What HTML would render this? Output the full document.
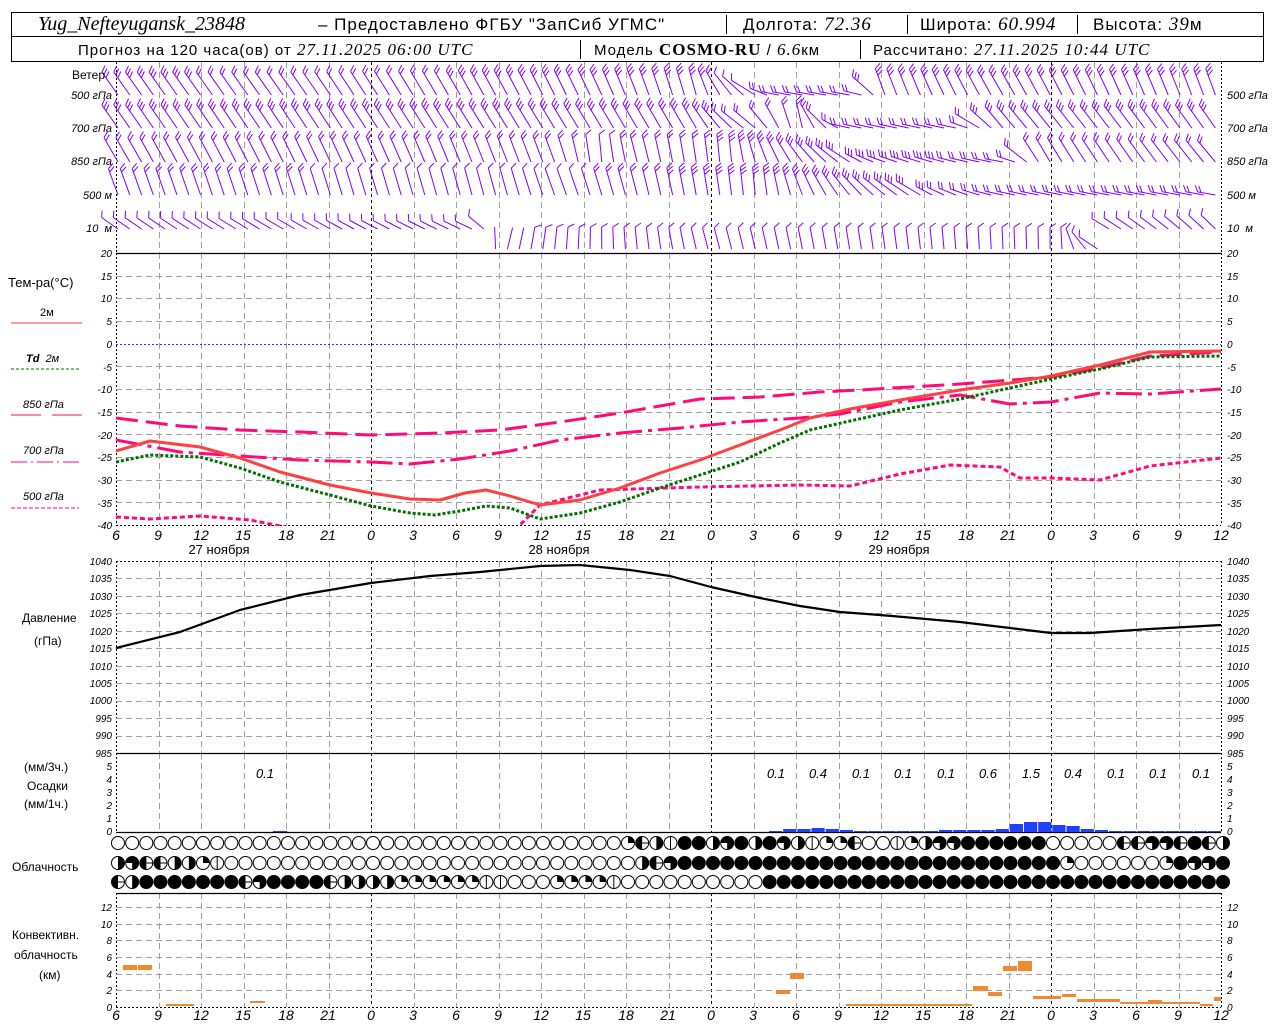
<!DOCTYPE html>
<html><head><meta charset="utf-8">
<style>
html,body{margin:0;padding:0;background:#fff;}
svg{display:block;font-family:"Liberation Sans","DejaVu Sans",sans-serif;}
.ax{font-size:11px;font-style:italic;fill:#000;}
.lb{font-size:12px;fill:#000;}
.hr{font-size:14px;font-style:italic;fill:#000;}
.pv{font-size:13px;font-style:italic;fill:#000;}
</style></head>
<body>
<svg id="s" width="1280" height="1024" viewBox="0 0 1280 1024" xmlns="http://www.w3.org/2000/svg">
<rect x="0" y="0" width="1280" height="1024" fill="#fff"/>
<g id="grid"></g>
<g id="data"></g>
<!-- header -->
<rect x="11.5" y="12.5" width="1252" height="49" fill="none" stroke="#000"/>
<line x1="11" y1="36.5" x2="1264" y2="36.5" stroke="#000"/>
<text x="38" y="30" style="font-family:'Liberation Serif',serif;font-style:italic;font-size:20px">Yug_Nefteyugansk_23848</text>
<text x="318" y="30" style="font-size:17px;letter-spacing:1px">– Предоставлено ФГБУ "ЗапСиб УГМС"</text>
<line x1="726.5" y1="15" x2="726.5" y2="34" stroke="#000"/>
<text x="743" y="30" style="font-size:17px;letter-spacing:1px">Долгота: <tspan style="font-family:'Liberation Serif',serif;font-style:italic;font-size:19px">72.36</tspan></text>
<line x1="907.5" y1="15" x2="907.5" y2="34" stroke="#000"/>
<text x="920" y="30" style="font-size:17px;letter-spacing:1px">Широта: <tspan style="font-family:'Liberation Serif',serif;font-style:italic;font-size:19px">60.994</tspan></text>
<line x1="1077.5" y1="15" x2="1077.5" y2="34" stroke="#000"/>
<text x="1093" y="30" style="font-size:17px;letter-spacing:1px">Высота: <tspan style="font-family:'Liberation Serif',serif;font-style:italic;font-size:19px">39</tspan>м</text>
<text x="78" y="55" style="font-size:15px;letter-spacing:1px">Прогноз на 120 часа(ов) от <tspan style="font-family:'Liberation Serif',serif;font-style:italic;font-size:17px">27.11.2025 06:00 UTC</tspan></text>
<line x1="580.5" y1="40" x2="580.5" y2="59" stroke="#000"/>
<text x="594" y="55" style="font-size:15px;letter-spacing:1px">Модель <tspan style="font-family:'Liberation Serif',serif;font-weight:bold;font-size:17px">COSMO-RU</tspan> / <tspan style="font-family:'Liberation Serif',serif;font-style:italic;font-size:17px">6.6</tspan>км</text>
<line x1="860.5" y1="40" x2="860.5" y2="59" stroke="#000"/>
<text x="873" y="55" style="font-size:15px;letter-spacing:1px">Рассчитано: <tspan style="font-family:'Liberation Serif',serif;font-style:italic;font-size:17px">27.11.2025 10:44 UTC</tspan></text>

<!-- wind labels -->
<text class="lb" x="72" y="79">Ветер</text>
<text class="ax" x="112" y="99" text-anchor="end">500 гПа</text>
<text class="ax" x="112" y="132" text-anchor="end">700 гПа</text>
<text class="ax" x="112" y="165" text-anchor="end">850 гПа</text>
<text class="ax" x="112" y="199" text-anchor="end">500 м</text>
<text class="ax" x="112" y="232" text-anchor="end">10 &#160;м</text>
<text class="ax" x="1227" y="99">500 гПа</text>
<text class="ax" x="1227" y="132">700 гПа</text>
<text class="ax" x="1227" y="165">850 гПа</text>
<text class="ax" x="1227" y="199">500 м</text>
<text class="ax" x="1227" y="232">10 &#160;м</text>

<!-- temp legend -->
<text class="lb" x="8" y="287" style="font-size:13px">Тем-ра(°C)</text>
<text class="ax" x="40" y="316" style="font-style:normal">2м</text>
<line x1="11" y1="323" x2="82" y2="323" stroke="#ff4040"/>
<text class="ax" x="26" y="362"><tspan style="font-weight:bold">Td</tspan> &#160;2м</text>
<line x1="11" y1="369" x2="79" y2="369" stroke="#007000" stroke-dasharray="3,2"/>
<text class="ax" x="23" y="408">850 гПа</text>
<line x1="11" y1="415" x2="41" y2="415" stroke="#ff0a78"/><line x1="52" y1="415" x2="82" y2="415" stroke="#ff0a78"/>
<text class="ax" x="23" y="454">700 гПа</text>
<line x1="11" y1="462" x2="79" y2="462" stroke="#ff0a78" stroke-dasharray="16,4,2,4"/>
<text class="ax" x="23" y="500">500 гПа</text>
<line x1="11" y1="508" x2="79" y2="508" stroke="#ff0a78" stroke-dasharray="4,2"/>

<!-- hour labels -->
<g class="hr" text-anchor="middle">
<text x="116" y="540">6</text><text x="158" y="540">9</text><text x="201" y="540">12</text><text x="243" y="540">15</text><text x="286" y="540">18</text><text x="328" y="540">21</text><text x="371" y="540">0</text><text x="413" y="540">3</text><text x="456" y="540">6</text><text x="498" y="540">9</text><text x="541" y="540">12</text><text x="583" y="540">15</text><text x="626" y="540">18</text><text x="668" y="540">21</text><text x="711" y="540">0</text><text x="753" y="540">3</text><text x="796" y="540">6</text><text x="838" y="540">9</text><text x="881" y="540">12</text><text x="923" y="540">15</text><text x="966" y="540">18</text><text x="1008" y="540">21</text><text x="1051" y="540">0</text><text x="1093" y="540">3</text><text x="1136" y="540">6</text><text x="1178" y="540">9</text><text x="1221" y="540">12</text>
</g>
<g class="lb" style="font-size:13px" text-anchor="middle">
<text x="219" y="554">27 ноября</text><text x="559" y="554">28 ноября</text><text x="899" y="554">29 ноября</text>
</g>
<g class="hr" text-anchor="middle">
<text x="116" y="1020">6</text><text x="158" y="1020">9</text><text x="201" y="1020">12</text><text x="243" y="1020">15</text><text x="286" y="1020">18</text><text x="328" y="1020">21</text><text x="371" y="1020">0</text><text x="413" y="1020">3</text><text x="456" y="1020">6</text><text x="498" y="1020">9</text><text x="541" y="1020">12</text><text x="583" y="1020">15</text><text x="626" y="1020">18</text><text x="668" y="1020">21</text><text x="711" y="1020">0</text><text x="753" y="1020">3</text><text x="796" y="1020">6</text><text x="838" y="1020">9</text><text x="881" y="1020">12</text><text x="923" y="1020">15</text><text x="966" y="1020">18</text><text x="1008" y="1020">21</text><text x="1051" y="1020">0</text><text x="1093" y="1020">3</text><text x="1136" y="1020">6</text><text x="1178" y="1020">9</text><text x="1221" y="1020">12</text>
</g>

<!-- pressure labels -->
<text class="lb" x="22" y="622">Давление</text>
<text class="lb" x="34" y="645">(гПа)</text>
<!-- precip labels -->
<text class="lb" x="24" y="771">(мм/3ч.)</text>
<text class="lb" x="27" y="790">Осадки</text>
<text class="lb" x="24" y="808">(мм/1ч.)</text>
<g class="pv" text-anchor="middle">
<text x="265" y="778">0.1</text><text x="776" y="778">0.1</text><text x="818" y="778">0.4</text><text x="861" y="778">0.1</text><text x="903" y="778">0.1</text><text x="946" y="778">0.1</text><text x="988" y="778">0.6</text><text x="1031" y="778">1.5</text><text x="1073" y="778">0.4</text><text x="1116" y="778">0.1</text><text x="1158" y="778">0.1</text><text x="1201" y="778">0.1</text>
</g>
<text class="lb" x="12" y="871">Облачность</text>
<text class="lb" x="12" y="939">Конвективн.</text>
<text class="lb" x="14" y="959">облачность</text>
<text class="lb" x="39" y="979">(км)</text>

<!-- numeric axis labels -->
<g class="ax" style="font-size:10px" text-anchor="end">
<text x="112" y="257">20</text><text x="112" y="280">15</text><text x="112" y="302">10</text>
<text x="112" y="325">5</text><text x="112" y="348">0</text><text x="112" y="371">-5</text><text x="112" y="393">-10</text><text x="112" y="416">-15</text><text x="112" y="439">-20</text><text x="112" y="461">-25</text><text x="112" y="484">-30</text><text x="112" y="507">-35</text><text x="112" y="529">-40</text>
<text x="112" y="565">1040</text><text x="112" y="582">1035</text><text x="112" y="600">1030</text><text x="112" y="617">1025</text><text x="112" y="635">1020</text><text x="112" y="652">1015</text><text x="112" y="670">1010</text><text x="112" y="687">1005</text><text x="112" y="704">1000</text><text x="112" y="722">995</text><text x="112" y="739">990</text><text x="112" y="757">985</text>
<text x="112" y="770">5</text><text x="112" y="783">4</text><text x="112" y="796">3</text><text x="112" y="809">2</text><text x="112" y="822">1</text><text x="112" y="835">0</text>
<text x="112" y="911">12</text><text x="112" y="928">10</text><text x="112" y="944">8</text><text x="112" y="961">6</text><text x="112" y="978">4</text><text x="112" y="994">2</text><text x="112" y="1011">0</text>
</g>
<g class="ax" style="font-size:10px">
<text x="1227" y="257">20</text><text x="1227" y="280">15</text><text x="1227" y="302">10</text><text x="1227" y="325">5</text><text x="1227" y="348">0</text><text x="1227" y="371">-5</text><text x="1227" y="393">-10</text><text x="1227" y="416">-15</text><text x="1227" y="439">-20</text><text x="1227" y="461">-25</text><text x="1227" y="484">-30</text><text x="1227" y="507">-35</text><text x="1227" y="529">-40</text>
<text x="1227" y="565">1040</text><text x="1227" y="582">1035</text><text x="1227" y="600">1030</text><text x="1227" y="617">1025</text><text x="1227" y="635">1020</text><text x="1227" y="652">1015</text><text x="1227" y="670">1010</text><text x="1227" y="687">1005</text><text x="1227" y="704">1000</text><text x="1227" y="722">995</text><text x="1227" y="739">990</text><text x="1227" y="757">985</text>
<text x="1227" y="770">5</text><text x="1227" y="783">4</text><text x="1227" y="796">3</text><text x="1227" y="809">2</text><text x="1227" y="822">1</text><text x="1227" y="835">0</text>
<text x="1227" y="911">12</text><text x="1227" y="928">10</text><text x="1227" y="944">8</text><text x="1227" y="961">6</text><text x="1227" y="978">4</text><text x="1227" y="994">2</text><text x="1227" y="1011">0</text>
</g>
</svg>
<script>
(function(){
var NS="http://www.w3.org/2000/svg";
var G=document.getElementById("grid"),D=document.getElementById("data");
function el(p,t,a){var e=document.createElementNS(NS,t);for(var k in a)e.setAttribute(k,a[k]);p.appendChild(e);return e;}
function line(p,x1,y1,x2,y2,c,w,da){var a={x1:x1,y1:y1,x2:x2,y2:y2,stroke:c,"stroke-width":w||1};if(da)a["stroke-dasharray"]=da;return el(p,"line",a);}
var X0=116,X1=1221,PH=(X1-X0)/78;
function hx(h){return X0+h*PH;}
var secs=[[62,253],[253,525],[561,753],[753,832],[893,1007]];
for(var h=3;h<78;h+=3){var x=Math.round(hx(h))+.5;var day=(h==18||h==42||h==66);
 secs.forEach(function(s){line(G,x,s[0],x,s[1],day?"#000":"#a0a0a0",1,day?"3,3":"6,4");});}
secs.forEach(function(s){line(G,116.5,s[0],116.5,s[1],"#000",1,"2,2");line(G,1221.5,s[0],1221.5,s[1],"#000",1,"2,2");});
function hg(y,c,da){line(G,116,Math.round(y)+.5,1221,Math.round(y)+.5,c||"#a0a0a0",1,da||"6,4");}
for(var T=15;T>=-40;T-=5){var y=253+(20-T)*4.533;hg(y,T==0?"#2040ff":(T==-40?"#000":"#a0a0a0"),T==0?"2,2":(T==-40?"2,2":"6,4"));}
for(var p=1040;p>985;p-=5){hg(561+(1040-p)*3.491,p==1040?"#000":"#a0a0a0",p==1040?"2,2":"6,4");}
for(var k=2;k<=12;k+=2){hg(1007-k*8.33);}
line(G,116,253.5,1221,253.5,"#000",1.2);line(G,116,753.5,1221,753.5,"#000",1.2);line(G,116,832.5,1221,832.5,"#000",1.2);line(G,116,893.5,1221,893.5,"#000",1.2);line(G,116,1007.5,1221,1007.5,"#000",1,"2,2");
// wind barbs
var P="#8000ff";
function interp(a,x){for(var i=0;i<a.length-1;i++){if(x>=a[i][0]&&x<=a[i+1][0]){var t=(x-a[i][0])/(a[i+1][0]-a[i][0]);return [a[i][1]+t*(a[i+1][1]-a[i][1]),Math.round(a[i][2]+t*(a[i+1][2]-a[i][2]))];}}return [a[a.length-1][1],a[a.length-1][2]];}
function barb(x,y,ang,n,L){var r=ang*Math.PI/180,dx=Math.sin(r),dy=-Math.cos(r);var tx=x+L*dx,ty=y+L*dy;
 var d="M"+x.toFixed(1)+","+y.toFixed(1)+"L"+tx.toFixed(1)+","+ty.toFixed(1);
 var br=(ang+60)*Math.PI/180;var bx=Math.sin(br)*7,by=-Math.cos(br)*7;
 for(var k=0;k<n;k++){var px=tx-dx*k*3.5,py=ty-dy*k*3.5;d+="M"+px.toFixed(1)+","+py.toFixed(1)+"l"+bx.toFixed(1)+","+by.toFixed(1);}
 el(D,"path",{d:d,stroke:P,fill:"none","stroke-width":1});}
var rows=[
 [95,28,[[116,-35,3],[300,-35,2],[600,-25,3],[700,-15,3],[740,-45,1],[780,-80,2],[860,-80,2],[885,-20,3],[1000,-30,3],[1221,-20,3]]],
 [128,28,[[116,-35,3],[700,-30,3],[750,-55,2],[800,-10,2],[850,-78,2],[960,-78,2],[1000,-40,3],[1221,-35,3]]],
 [162,28,[[116,-30,2],[560,-20,2],[600,-5,1],[640,-15,2],[700,-8,2],[730,-5,3],[880,-70,3],[1010,-80,2],[1040,-30,2],[1221,-40,2]]],
 [195,28,[[116,-20,2],[500,-15,1],[560,-20,1],[700,-10,3],[760,-5,3],[880,-50,3],[1000,-78,2],[1221,-80,2]]],
 [229,20,[[116,-55,1],[480,-65,1],[500,15,0],[560,5,1],[711,-15,1],[880,-8,1],[1060,0,1],[1100,-60,1],[1221,-45,1]]]
];
rows.forEach(function(r){for(var x=118;x<=1221;x+=11.8){var v=interp(r[2],x);var by=r[0];var L=r[1];
 if(r[0]==229&&x>490&&x<1100){by=249;L=22;}
 if(Math.abs(v[0])>60){L=Math.min(L,18);}
 barb(x,by,v[0],v[1],L);}});
// curves
function poly(pts,c,w,da){var d=pts.map(function(p,i){return(i?"L":"M")+p[0]+","+p[1];}).join("");var a={d:d,stroke:c,fill:"none","stroke-width":w,"stroke-linejoin":"round"};if(da)a["stroke-dasharray"]=da;el(D,"path",a);}
var cp=el(D,"clipPath",{id:"tc"});el(cp,"rect",{x:116,y:253,width:1105,height:273});
var TG=el(D,"g",{"clip-path":"url(#tc)"});
var Dsave=D;D=TG;
poly([[116,418],[180,426],[240,430],[300,432],[371,435],[440,433],[500,430],[560,422],[620,413],[700,399],[760,397],[820,392],[860,390],[960,384],[1051,377],[1100,368],[1150,356],[1221,352]],"#ff0a78",3,"22,8");
poly([[116,440],[180,452],[240,456],[300,460],[371,462],[410,464],[460,459],[510,451],[560,440],[620,433],[680,428],[740,422],[800,418],[840,414],[900,402],[960,395],[1010,404],[1051,402],[1100,393],[1150,394],[1221,389]],"#ff0a78",3,"26,6,4,6");
poly([[116,517],[150,519],[200,516],[250,520],[290,528]],"#ff0a78",3,"5,3");
poly([[515,530],[540,505],[600,490],[700,487],[800,485],[850,486],[900,474],[950,465],[1000,467],[1020,478],[1051,478],[1100,480],[1150,466],[1221,458]],"#ff0a78",3,"5,3");
poly([[116,462],[150,455],[200,457],[240,468],[280,482],[330,495],[371,506],[410,513],[435,515],[460,511],[486,506],[510,508],[540,519],[580,513],[620,502],[660,488],[700,475],[740,462],[780,443],[810,430],[850,421],[900,410],[960,399],[1010,388],[1051,379],[1100,369],[1150,357],[1221,356]],"#007000",3,"3,2");
poly([[116,451],[150,441],[200,447],[240,458],[280,472],[330,485],[371,493],[410,499],[440,500],[465,493],[486,490],[510,496],[540,505],[580,500],[620,488],[660,473],[700,460],[740,445],[780,430],[810,418],[850,409],[900,400],[960,390],[1010,383],[1051,376],[1100,365],[1150,352],[1221,351]],"#ff4040",3);
D=Dsave;
poly([[116,648],[180,632],[240,610],[300,595],[371,583],[430,576],[480,572],[540,566],[580,565],[630,570],[670,576],[711,587],[760,598],[800,606],[840,612],[880,615],[960,622],[1010,628],[1051,633],[1090,633],[1150,629],[1221,625]],"#000",2.2);
var pb=[1,3,3,4,3,2,1,1,1,1,1,1,2,2,2,2,3,8,10,10,7,6,3,2,1,1,1,1,1,1,1,1];
pb.forEach(function(v,i){var x=783+i*PH-14;el(D,"rect",{x:x.toFixed(1),y:832-v,width:(PH-1).toFixed(1),height:v,fill:"#2040ff"});});
el(D,"rect",{x:273,y:831,width:14,height:1,fill:"#2040ff"});
var cv=[[123,965,14,5],[138,965,14,5],[166,1004,28,2],[250,1001,15,2],[776,990,14,4],[790,973,14,6],[846,1004,126,2],[973,986,15,5],[988,992,14,4],[1003,966,14,5],[1018,961,14,10],[1033,996,14,3],[1047,996,14,3],[1062,994,14,3],[1077,999,43,3],[1120,1002,80,2],[1148,1000,14,3],[1200,1004,13,2],[1214,997,7,4]];
cv.forEach(function(c){el(D,"rect",{x:c[0],y:c[1],width:c[2],height:c[3],fill:"#f08a30"});});
var rowsC=[
 "0000000000000000000000000000000000001chl44h34h43hl11c00l1h3344444400000cc33c4ch",
 "h3cchh1l00000000000000000000000000000hc34444444444444444444444444441000000143344",
 "ch4444444c34444chhhh111111ll0001111l000000000044444444444444444444444444444444444"];
var ys=[843,863,882];
rowsC.forEach(function(s,ri){for(var i=0;i<79;i++){var ch=s.charAt(i)||"0";var cx=118+i*PH,cy=ys[ri],R=6.5;
 var g=el(D,"g",{});
 if(ch=="4"){el(g,"circle",{cx:cx,cy:cy,r:R,fill:"#000",stroke:"#000"});continue;}
 el(g,"circle",{cx:cx,cy:cy,r:R,fill:"#fff",stroke:"#000","stroke-width":1});
 if(ch=="1")el(g,"path",{d:"M"+cx+","+cy+"L"+cx+","+(cy-R)+"A"+R+","+R+" 0 0 1 "+(cx+R)+","+cy+"Z",fill:"#000"});
 if(ch=="h")el(g,"path",{d:"M"+cx+","+(cy-R)+"A"+R+","+R+" 0 0 1 "+cx+","+(cy+R)+"Z",fill:"#000"});
 if(ch=="3")el(g,"path",{d:"M"+cx+","+cy+"L"+(cx-R)+","+cy+"A"+R+","+R+" 0 1 1 "+cx+","+(cy+R)+"Z",fill:"#000"});
 if(ch=="l")line(g,cx,cy-R,cx,cy+R,"#000",1);
 if(ch=="c"){el(g,"path",{d:"M"+cx+","+(cy-R)+"A"+R+","+R+" 0 0 0 "+cx+","+(cy+R)+"Z",fill:"#000"});line(g,cx,cy,cx+R,cy,"#000",1);}
}});
})();
</script>
</body></html>
